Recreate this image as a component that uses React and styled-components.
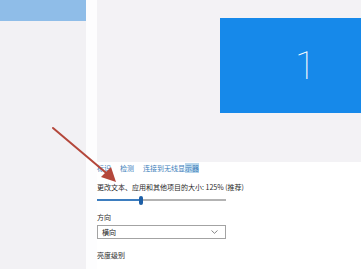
import React from "react";
import styled, { createGlobalStyle } from "styled-components";

const GlobalStyle = createGlobalStyle`
  html, body {
    margin: 0;
    padding: 0;
    background: #ffffff;
    font-family: "Noto Sans CJK SC", "Noto Sans", sans-serif;
  }
`;

const Page = styled.div`
  width: 361px;
  height: 269px;
  display: flex;
  overflow: hidden;
  position: relative;
  background: #ffffff;
`;

const Sidebar = styled.div`
  width: 86px;
  display: flex;
  flex-direction: column;
  background: #f2f1f4;
`;

const SidebarTop = styled.div`
  height: 21px;
  background: #8fbde8;
`;

const Gutter = styled.div`
  width: 11px;
  background: #fdfdfe;
`;

const Main = styled.div`
  flex: 1;
  display: flex;
  flex-direction: column;
`;

const Preview = styled.div`
  height: 162px;
  background: #f3f2f5;
  padding: 18px 0 0 123px;
  box-sizing: border-box;
  display: flex;
  align-items: flex-start;
`;

const Monitor = styled.div`
  flex: 1;
  height: 95px;
  background: #1689ea;
  display: flex;
  align-items: center;
  justify-content: center;
  padding-left: 30px;
  color: #ffffff;
  font-family: Roboto, "Open Sans", sans-serif;
  font-weight: 100;
  font-size: 38px;
`;

const Settings = styled.div`
  display: flex;
  flex-direction: column;
  padding-top: 1px;
  font-size: 7px;
  color: #222;
`;

const LinkRow = styled.div`
  display: flex;
  gap: 9px;
  height: 11px;
  line-height: 11px;
`;

const Link = styled.span`
  color: #3f7fbb;
`;

const Mark = styled.span`
  background: #b9d7ec;
`;

const Label = styled.div`
  height: 11px;
  line-height: 11px;
  margin-top: ${(p) => p.$top || 0}px;
  color: #2a2a2a;
`;

const Slider = styled.div`
  width: 129px;
  height: 10px;
  margin-top: 2px;
  display: flex;
  align-items: center;
`;

const Track = styled.div`
  height: 2px;
  flex: ${(p) => p.$grow};
  background: ${(p) => p.$color};
`;

const Thumb = styled.div`
  width: 4px;
  height: 9px;
  border-radius: 2px;
  background: #1e5fa6;
`;

const Select = styled.div`
  width: 129px;
  height: 14px;
  margin-top: 2px;
  box-sizing: border-box;
  border: 1px solid #a3a3a3;
  display: flex;
  align-items: center;
  justify-content: space-between;
  padding: 0 7px 0 4px;
  line-height: 12px;
`;

const Arrow = styled.svg`
  position: absolute;
  left: 0;
  top: 0;
  pointer-events: none;
`;

export default function App() {
  return (
    <>
      <GlobalStyle />
      <Page>
        <Sidebar>
          <SidebarTop />
        </Sidebar>
        <Gutter />
        <Main>
          <Preview>
            <Monitor>1</Monitor>
          </Preview>
          <Settings>
            <LinkRow>
              <Link>标识</Link>
              <Link>检测</Link>
              <Link>
                连接到无线显<Mark>示器</Mark>
              </Link>
            </LinkRow>
            <Label $top={8}>更改文本、应用和其他项目的大小: 125% (推荐)</Label>
            <Slider>
              <Track $grow={42} $color="#3d7dbf" />
              <Thumb />
              <Track $grow={83} $color="#b3b3b3" />
            </Slider>
            <Label $top={7}>方向</Label>
            <Select>
              <span>横向</span>
              <svg width="7" height="4" viewBox="0 0 7 4">
                <path d="M0.5 0.5 L3.5 3.3 L6.5 0.5" fill="none" stroke="#666" strokeWidth="0.8" />
              </svg>
            </Select>
            <Label $top={11}>亮度级别</Label>
          </Settings>
        </Main>
        <Arrow width="361" height="269" viewBox="0 0 361 269">
          <line x1="53" y1="128" x2="111" y2="177" stroke="#b4473b" strokeWidth="2" strokeLinecap="round" />
          <polygon points="116,182 101,177 111,167" fill="#b4473b" />
        </Arrow>
      </Page>
    </>
  );
}
